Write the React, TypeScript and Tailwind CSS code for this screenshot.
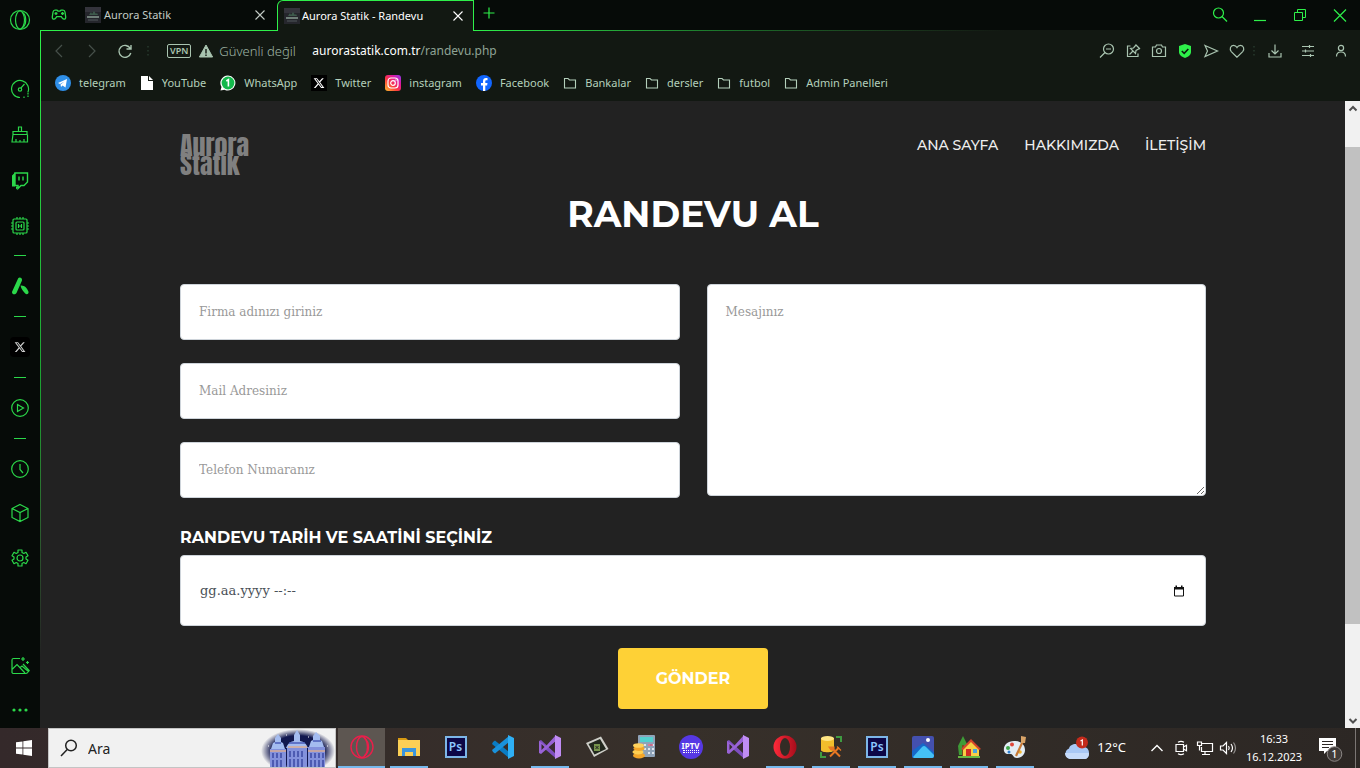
import type { ReactNode } from 'react';
import { FaXTwitter } from 'react-icons/fa6';

type IconProps = { className?: string; children: ReactNode; box?: string; width?: number };

function Line({ className = 'size-5', children, box = '0 0 20 20', width = 1.2 }: IconProps) {
  return (
    <svg className={className} viewBox={box} fill="none" stroke="currentColor" strokeWidth={width} aria-hidden="true">
      {children}
    </svg>
  );
}

function Favicon() {
  return (
    <svg className="size-4 shrink-0" viewBox="0 0 16 16" aria-hidden="true">
      <rect width="16" height="16" fill="#25262c" />
      <path d="M0 0h16v5H0z" fill="#34343c" />
      <path d="M2 9h12v2H2z" fill="#6f7e78" />
      <path d="M4 8l2-3 1 2 2-3 2 3 1-1 1 2z" fill="#3e5a4c" />
      <path d="M3 13h10" stroke="#50565a" />
    </svg>
  );
}

function CloseMark({ className }: { className: string }) {
  return (
    <Line className={className} box="0 0 12 12" width={1.1}>
      <path d="M1.5 1.5l9 9m0-9l-9 9" />
    </Line>
  );
}

function TabStrip() {
  return (
    <header className="flex h-[31px] shrink-0 bg-[#060b08] text-[11px]">
      <div className="flex w-[237px] shrink-0 items-center border-b border-[#2ef04a] pl-[11px]">
        <Line className="size-4 text-[#2bd84a]" box="0 0 16 16" width={1.3}>
          <path d="M4 3.200h2l1 .9h2l1-.9h2c1.200 0 1.800.8 2 2l.7 4.600c.2 1.500-.6 2.400-1.600 2.400-.9 0-1.400-.6-2-1.400l-.8-1.100H5.700l-.8 1.100c-.6.8-1.100 1.400-2 1.400-1 0-1.800-.9-1.600-2.400L2 5.200C2.200 4 2.800 3.200 4 3.200z" />
          <path d="M5 5v3M3.500 6.500h3M10 6.500h3M11.500 5v3" />
        </Line>
        <a href="#aurora" className="ml-[18px] flex flex-1 items-center gap-[3px] text-[#c3ccc5]">
          <Favicon />
          <span className="whitespace-nowrap">Aurora Statik</span>
        </a>
        <button aria-label="Sekmeyi kapat" className="mr-[11px]">
          <CloseMark className="size-3 text-[#c3ccc5]" />
        </button>
      </div>
      <div className="flex w-[197px] shrink-0 items-center rounded-tl-[6px] border-x border-t border-[#2ef04a] bg-[#121812] pr-[9px] pl-[6px] text-white">
        <a href="#randevu" className="flex flex-1 items-center gap-[2px]">
          <Favicon />
          <span className="whitespace-nowrap">Aurora Statik - Randevu</span>
        </a>
        <button aria-label="Sekmeyi kapat">
          <CloseMark className="size-3" />
        </button>
      </div>
      <div className="flex flex-1 flex-col">
        <div className="flex flex-1 items-center justify-between pr-3 pl-2 text-[#2ef04a]">
          <button aria-label="Yeni sekme" className="pb-1">
            <Line className="size-3.5" box="0 0 14 14"><path d="M7 1.500v11M1.500 7h11" /></Line>
          </button>
          <div className="flex items-center gap-6">
            <button aria-label="Ara">
              <Line className="size-4" box="0 0 16 16"><circle cx="6.500" cy="6" r="5" /><path d="M10 9.500l5 5" /></Line>
            </button>
            <button aria-label="Küçült">
              <Line className="size-4" box="0 0 16 16"><path d="M2 13.500h12" /></Line>
            </button>
            <button aria-label="Geri yükle">
              <Line className="size-4" box="0 0 16 16" width={1}><path d="M2.500 5.500h8v8h-8zM5.500 5.500v-3h8v8h-3" /></Line>
            </button>
            <button aria-label="Kapat">
              <Line className="size-4" box="0 0 16 16"><path d="M2 2.500l12 12m0-12l-12 12" /></Line>
            </button>
          </div>
        </div>
        <div className="h-px bg-linear-to-r from-[#2ef04a] via-[#1a6a28] via-30% to-[#121812] to-60%" />
      </div>
    </header>
  );
}

function AddressBar() {
  return (
    <div className="flex h-[39px] shrink-0 items-center pr-[11px] pl-[10px] text-[#a9c4b0]">
      <div className="flex items-center gap-[17px]">
        <button aria-label="Geri" className="text-[#46504a]">
          <Line className="size-4" box="0 0 16 16"><path d="M11 2L5 8l6 6" /></Line>
        </button>
        <button aria-label="İleri" className="text-[#46504a]">
          <Line className="size-4" box="0 0 16 16"><path d="M5 2l6 6-6 6" /></Line>
        </button>
        <button aria-label="Yenile">
          <Line className="size-4" box="0 0 16 16" width={1.4}><path d="M13.300 5.500A6 6 0 1 0 13.800 10M14 2v4h-4.500" /></Line>
        </button>
      </div>
      <Line className="mx-[10px] size-2.5 text-[#26382c]" box="0 0 10 10" width={1.6}><path d="M5 0v10" strokeDasharray="1.600 2.400" /></Line>
      <span className="ml-1 rounded-[2px] border border-[#a9c4b0] px-[2px] text-[9px] leading-3 font-semibold">VPN</span>
      <svg className="ml-2 size-3.5" viewBox="0 0 14 14" aria-hidden="true">
        <path d="M7 1l6.600 12H.4z" fill="#a9c4b0" stroke="#a9c4b0" strokeLinejoin="round" />
        <path d="M7 5v4.500M7 10.500v1.500" stroke="#121812" strokeWidth="1.400" />
      </svg>
      <span className="ml-[6px] w-[93px] pt-[2px] text-[13px] font-light whitespace-nowrap text-[#9fb5a5]">Güvenli değil</span>
      <div className="flex-1 text-[12px] text-[#8fa395]">
        <span className="text-white">aurorastatik.com.tr</span>/randevu.php
      </div>
      <div className="flex items-center gap-[10px]">
        <button aria-label="Uzaklaştır">
          <Line className="size-4" box="0 0 16 16"><circle cx="9.500" cy="6" r="5" /><path d="M6 9.500l-5 5M7 6h5" /></Line>
        </button>
        <button aria-label="Sabitle">
          <Line className="size-4" box="0 0 16 16"><path d="M5.500 3H2.500v10.500H13V10.500M10.500 1.500l4.500 4.500M11 2L8.500 5 5.500 5.500l5 5L11 7.500l3.500-2M8 8L4.500 11.500" /></Line>
        </button>
        <button aria-label="Anlık görüntü">
          <Line className="size-4" box="0 0 16 16"><path d="M1.500 4h3l1-2h5l1 2h3v9.500h-13z" /><circle cx="8" cy="8" r="2.500" /></Line>
        </button>
        <button aria-label="Engelleyici">
          <svg className="size-4" viewBox="0 0 16 16" aria-hidden="true">
            <path d="M8 1l6 2v6c0 3-3 5-6 6-3-1-6-3-6-6V3z" fill="#2ef04a" />
            <path d="M4.800 8l2.400 2.300L11.300 6" fill="none" stroke="#0c180e" strokeWidth="1.600" />
          </svg>
        </button>
        <button aria-label="Gönder">
          <Line className="size-4" box="0 0 16 16"><path d="M2 2.500L14.500 8 2 13.500 4.500 8z" /></Line>
        </button>
        <button aria-label="Favorilere ekle">
          <Line className="size-4" box="0 0 16 16"><path d="M8 14.200L2.300 8.600C.2 6.300 1.400 2.300 4.500 2.300 6.200 2.300 7.300 3.200 8 4.500c.7-1.300 1.800-2.200 3.500-2.200 3.100 0 4.300 4 2.200 6.300z" /></Line>
        </button>
      </div>
      <Line className="mx-1 size-2.5 text-[#26382c]" box="0 0 10 10" width={1.6}><path d="M5 0v10" strokeDasharray="1.600 2.400" /></Line>
      <div className="flex items-center gap-[17px] pl-1">
        <button aria-label="İndirilenler">
          <Line className="size-4" box="0 0 16 16"><path d="M8 1.500v9M4.500 7.500L8 11l3.500-3.500M2 10v4h12v-4" /></Line>
        </button>
        <button aria-label="Kolay kurulum">
          <Line className="size-4" box="0 0 16 16"><path d="M2 3.500h12M2 8h12M2 12.500h12M9.500 2v3M5.500 6.500v3M10.500 11v3" /></Line>
        </button>
        <button aria-label="Profil">
          <Line className="size-4" box="0 0 16 16"><circle cx="8" cy="5" r="2.600" /><path d="M3.500 13.500C3.500 10.500 5 9 8 9s4.500 1.500 4.500 4.500" /></Line>
        </button>
      </div>
    </div>
  );
}

function Folder() {
  return (
    <Line className="h-4 w-3.5" box="0 0 14 16" width={1.1}>
      <path d="M1.500 3.500h3.500l1.500 1.500h6v8h-11z" />
    </Line>
  );
}

const siteIcons: Record<string, ReactNode> = {
  telegram: (
    <svg className="size-4" viewBox="0 0 16 16" aria-hidden="true">
      <circle cx="8" cy="8" r="8" fill="#2f8fe8" />
      <path d="M3 8l9-4-1.500 8.500-3-2-1.500 1.500-.5-2.500L9.500 6.500 5 9z" fill="#fff" />
    </svg>
  ),
  YouTube: (
    <svg className="h-4 w-3.5" viewBox="0 0 14 16" aria-hidden="true">
      <path d="M1 1h7v5h5v9H1zM9 1l4 4H9z" fill="#fff" />
    </svg>
  ),
  WhatsApp: (
    <svg className="size-4" viewBox="0 0 16 16" aria-hidden="true">
      <path d="M8 .5a7.500 7.500 0 1 1-3.500 14.200L.5 15.500l1-3.600A7.500 7.500 0 0 1 8 .5z" fill="#fff" />
      <circle cx="8" cy="8" r="6.400" fill="#13b84b" />
      <path d="M6.300 6L8.400 4.700V11.500" fill="none" stroke="#fff" strokeWidth="1.600" />
    </svg>
  ),
  Twitter: (
    <span className="flex size-4 items-center justify-center bg-black text-white"><FaXTwitter className="size-3" /></span>
  ),
  instagram: (
    <svg className="size-4" viewBox="0 0 16 16" aria-hidden="true">
      <defs>
        <linearGradient id="ig" x1="0" y1="1" x2="1" y2="0">
          <stop offset="0" stopColor="#ffc12e" />
          <stop offset=".4" stopColor="#fb3a3c" />
          <stop offset=".7" stopColor="#e0179d" />
          <stop offset="1" stopColor="#8a3cf0" />
        </linearGradient>
      </defs>
      <rect width="16" height="16" rx="3" fill="url(#ig)" />
      <rect x="3" y="3" width="10" height="10" rx="3" fill="none" stroke="#fff" strokeWidth="1.200" />
      <circle cx="8" cy="8" r="2.300" fill="none" stroke="#fff" strokeWidth="1.200" />
      <circle cx="11" cy="5" r=".7" fill="#fff" />
    </svg>
  ),
  Facebook: (
    <svg className="size-4" viewBox="0 0 16 16" aria-hidden="true">
      <circle cx="8" cy="8" r="8" fill="#1166ff" />
      <path d="M7 16v-5.500H5V8h2V6.200C7 4 8.200 3 10 3h1.500v2.200h-1C9.600 5.200 9.300 5.600 9.300 6.400V8h2.200l-.4 2.500H9.300V16z" fill="#fff" />
    </svg>
  ),
};

const bookmarks = ['telegram', 'YouTube', 'WhatsApp', 'Twitter', 'instagram', 'Facebook', 'Bankalar', 'dersler', 'futbol', 'Admin Panelleri'];

function Bookmarks() {
  return (
    <nav aria-label="Yer imleri" className="flex h-[31px] shrink-0 items-start gap-3.5 pt-[5px] pl-[14px] text-[11px] text-[#b4d0bb]">
      {bookmarks.map((name) => (
        <a key={name} href="#bookmark" className="flex items-center gap-2 leading-4 whitespace-nowrap">
          {siteIcons[name] ?? <Folder />}
          {name}
        </a>
      ))}
    </nav>
  );
}

function Dash() {
  return <div className="h-px w-3 bg-[#2bd84a]" />;
}

function Sidebar() {
  return (
    <aside className="flex w-10 shrink-0 flex-col items-center bg-[#060b08] pt-[9px] text-[#2bd84a]">
      <button aria-label="Opera GX" className="mb-12">
        <Line className="size-[22px]" box="0 0 22 22"><circle cx="11" cy="11" r="9.500" /><ellipse cx="11" cy="11" rx="4.500" ry="9" /><path d="M13 3c5 3 5 13 0 16" /></Line>
      </button>
      <button aria-label="GX Control" className="mb-[26px]">
        <Line><path d="M10 18.500a8.500 8.500 0 1 1 7.800-5M10.800 9.200L14.500 5" /><circle cx="10" cy="10.500" r="1.700" /><path d="M18 14v4M14 17.500v1.500" strokeDasharray="1.500 1" /></Line>
      </button>
      <button aria-label="GX Cleaner" className="mb-[26px]">
        <Line><path d="M8.500 6V2h3v4M3 6.500h14v3H3zM3 9.500L2 17h15.500V9.500M6 17v-3M10 17v-2M14 17v-3" /></Line>
      </button>
      <button aria-label="Twitch" className="mb-[25px]">
        <Line width={1.4}>
          <path d="M5 2h12.500v9l-3.500 3.500h-3l-3 3v-3H5z" />
          <path d="M5 1.500L2 4.500v11h4v3l3-3H5z" fill="currentColor" stroke="none" />
          <path d="M9 5.500v4M13 5.500v4" />
        </Line>
      </button>
      <button aria-label="Mods" className="mb-[19px]">
        <Line><rect x="3" y="3" width="14" height="14" rx="1" /><rect x="6" y="6" width="8" height="8" rx="1" /><path d="M8.500 8v4M11.500 8v4M8.500 10h3M7 3V1M10 3V1M13 3V1M7 19v-2M10 19v-2M13 19v-2M3 7H1M3 10H1M3 13H1M19 7h-2M19 10h-2M19 13h-2" /></Line>
      </button>
      <Dash />
      <button aria-label="Aria" className="my-5">
        <svg className="size-5" viewBox="0 0 20 20" fill="currentColor" aria-hidden="true">
          <path d="M8.200 2.200c1.600-1.500 4.300 0 3.800 2.200L6.500 17c-1.200 2-4 1.800-4.500-.5 0-.8.200-1.200.5-1.700zM10.500 9.500c4-.5 6.500 2.500 8 6.200.5 2.200-1.700 3.300-3.300 1.800-2-2.500-4-4.500-4.700-8z" />
        </svg>
      </button>
      <Dash />
      <a href="#x" aria-label="X" className="my-5 flex size-5 items-center justify-center rounded-[4px] bg-black text-[#d0d0d0]">
        <FaXTwitter className="size-3" />
      </a>
      <Dash />
      <button aria-label="Player" className="my-5">
        <Line><circle cx="10" cy="10" r="8.300" /><path d="M7.500 6.500v7l6-3.500z" /></Line>
      </button>
      <Dash />
      <button aria-label="Geçmiş" className="mt-5 mb-6">
        <Line><circle cx="10" cy="10" r="8.300" /><path d="M10 5v5.500l3 3.500" /></Line>
      </button>
      <button aria-label="Eklentiler" className="mb-[25px]">
        <Line><path d="M10 1.500l8 4v9l-8 4-8-4v-9zM2 5.500l8 4 8-4M10 9.500v9" /></Line>
      </button>
      <button aria-label="Ayarlar">
        <Line><circle cx="10" cy="10" r="3" /><path d="M8 4.500V2h4v2.500l1.800 1 2.200-1.200 2 3.400L16 9v2l2 1.300-2 3.400-2.200-1.200-1.800 1V18H8v-2.500l-1.800-1L4 15.700l-2-3.400L4 11V9L2 7.700l2-3.400 2.200 1.200z" strokeLinejoin="round" /></Line>
      </button>
      <button aria-label="Duvar kâğıdı" className="mt-auto mb-[25px]">
        <Line><path d="M10 2.500H3.500A1.500 1.500 0 0 0 2 4v12.500A1.500 1.500 0 0 0 3.500 17.500H16c1.200 0 1.500-.5 1.500-1.500M2.500 13l4.500-4.500 8 8.500M9.500 12l2.500-2 7 6M13 8l6.500 7M13 1v4M11 3h4M17.500 5v3M16 6.500h3" /></Line>
      </button>
      <button aria-label="Daha fazla" className="mb-[9px]">
        <svg className="h-[18px] w-5" viewBox="0 0 20 18" fill="currentColor" aria-hidden="true">
          <circle cx="4" cy="9" r="1.600" /><circle cx="10" cy="9" r="1.600" /><circle cx="16" cy="9" r="1.600" />
        </svg>
      </button>
    </aside>
  );
}

const fieldClass =
  "w-full rounded-[4px] border border-[#ced4da] bg-white px-[18px] font-['Roboto_Slab','DejaVu_Serif',serif] text-[12px] text-[#495057] placeholder:text-[#999999]";

function Site() {
  return (
    <main className="min-w-0 flex-1 overflow-hidden bg-[#222222] px-8 font-['Montserrat','Inter',sans-serif]">
      <div className="mx-auto max-w-[1026px]">
        <div className="flex items-start justify-between pt-[35px]">
          <a
            href="#home"
            className="font-['Impact','Anton','Oswald',sans-serif] text-[26px] leading-[19px] text-[#808080]"
          >
            Aurora
            <br />
            Statik
          </a>
          <nav aria-label="Site" className="flex gap-[26px] text-[14px] leading-[18px] font-medium text-[#eeeeee]">
            <a href="#ana">ANA SAYFA</a>
            <a href="#hakkimizda">HAKKIMIZDA</a>
            <a href="#iletisim">İLETİŞİM</a>
          </nav>
        </div>
        <h1 className="mt-4 text-center text-[36px] leading-12 font-bold text-white">RANDEVU AL</h1>
        <form className="mt-[46px]">
          <div className="grid grid-cols-2 gap-[27px]">
            <div className="flex flex-col gap-[23px]">
              <input aria-label="Firma adı" placeholder="Firma adınızı giriniz" className={`h-14 ${fieldClass}`} />
              <input aria-label="Mail adresi" type="email" placeholder="Mail Adresiniz" className={`h-14 ${fieldClass}`} />
              <input aria-label="Telefon numarası" type="tel" placeholder="Telefon Numaranız" className={`h-14 ${fieldClass}`} />
            </div>
            <textarea aria-label="Mesaj" placeholder="Mesajınız" className={`block h-[212px] resize py-[18px] ${fieldClass}`} />
          </div>
          <label htmlFor="tarih" className="mt-7 block text-[16px] leading-6 font-bold text-white">
            RANDEVU TARİH VE SAATİNİ SEÇİNİZ
          </label>
          <div className="mt-[5px] flex items-center rounded-[4px] border border-[#ced4da] bg-white pr-5 pl-[19px]">
            <input
              id="tarih"
              defaultValue="gg.aa.yyyy --:--"
              className="h-[69px] flex-1 font-['Roboto_Slab','DejaVu_Serif',serif] text-[13px] text-[#495057] outline-none"
            />
            <button type="button" aria-label="Takvimi aç">
              <svg className="size-3" viewBox="0 0 12 12" aria-hidden="true">
                <path d="M1.500 2.500h9v8.500h-9z" fill="none" stroke="#111" />
                <path d="M1 2h10v2.500H1zM2.500.5h1.500V2H2.500zM8 .5h1.500V2H8z" fill="#111" />
              </svg>
            </button>
          </div>
          <button
            type="submit"
            className="mx-auto mt-[22px] block rounded-[4px] bg-[#fed136] px-[38px] py-[18px] text-[16px] leading-[25px] font-bold text-white"
          >
            GÖNDER
          </button>
        </form>
      </div>
    </main>
  );
}

function ScrollTrack() {
  return (
    <div className="flex w-[15px] shrink-0 flex-col items-center bg-[#f1f1f1] text-[#505050]">
      <Line className="h-[15px] w-3" box="0 0 12 15" width={2}><path d="M2.500 9.500L6 6l3.500 3.500" /></Line>
      <div className="mt-[31px] w-full flex-[477] bg-[#c1c1c1]" />
      <div className="flex-[89]" />
      <Line className="h-[15px] w-3" box="0 0 12 15" width={2}><path d="M2.500 6L6 9.500 9.500 6" /></Line>
    </div>
  );
}

function PhotoshopIcon() {
  return (
    <span className="flex size-[22px] items-center justify-center border-2 border-[#7cb6e8] bg-[#0c0747] text-[12px] font-semibold text-[#8cc8ff]">
      Ps
    </span>
  );
}

function VisualStudioIcon() {
  return (
    <svg className="size-6" viewBox="0 0 24 24" aria-hidden="true">
      <path d="M1 6l2-1 15 14-.5 4L1 9z" fill="#7e4fc0" />
      <path d="M1 6v12l2 1 15-13V0L8 11z" fill="#9963d6" />
      <path d="M3.500 9v6L6.500 12z" fill="#33292a" />
      <path d="M17 0l6 3v18l-6 3z" fill="#c08cf4" />
      <path d="M17 7v10l-6-5z" fill="#3a2a34" />
    </svg>
  );
}

type App = { name: string; open?: boolean; active?: boolean; icon: ReactNode };

const pinned: App[] = [
  {
    name: 'Opera GX', open: true, active: true,
    icon: <Line className="size-6 text-[#ea1f4b]" box="0 0 24 24" width={1.4}><circle cx="12" cy="12" r="11" /><ellipse cx="12" cy="12" rx="5.500" ry="10.500" /><path d="M14 3c6 4 6 14 0 18" /></Line>,
  },
  {
    name: 'Dosya Gezgini', open: true,
    icon: (
      <svg className="size-6" viewBox="0 0 24 24" aria-hidden="true">
        <path d="M1 3h8l2 2h-10z" fill="#d89a12" /><path d="M1 5h22v16H1z" fill="#fbcf55" />
        <path d="M5 13h14v8h-3v-4H8v4H5z" fill="#3a95dc" />
      </svg>
    ),
  },
  { name: 'Photoshop', icon: <PhotoshopIcon /> },
  {
    name: 'VS Code',
    icon: (
      <svg className="size-6" viewBox="0 0 24 24" aria-hidden="true">
        <path d="M2 7l2-1.500L18 17v6L1 9z" fill="#0a7cc4" />
        <path d="M2 17l2 1.500L18 7V1L1 15z" fill="#1a92dc" />
        <path d="M17 0l6 3v18l-6 3z" fill="#2fb0f5" />
      </svg>
    ),
  },
  { name: 'Visual Studio', open: true, icon: <VisualStudioIcon /> },
  {
    name: 'Emülatör',
    icon: (
      <svg className="size-6" viewBox="0 0 24 24" aria-hidden="true">
        <path d="M1 8l15-6.500L23.500 14 9 22z" fill="#cfcfc9" /><path d="M3.500 9l11.500-5L21 14 9.500 19.500z" fill="#22281e" />
        <path d="M9 9h6v7H9z" fill="#76944c" /><path d="M10.500 11l3 3m0-3l-3 3" stroke="#222" />
      </svg>
    ),
  },
  {
    name: 'Muhasebe',
    icon: (
      <svg className="size-6" viewBox="0 0 24 24" aria-hidden="true">
        <rect x="6" y="0" width="17" height="22" rx="1" fill="#8fa3b8" /><path d="M8 2h13v5H8z" fill="#53d0cf" />
        <path d="M12 10h2M16 10h2M20 10h2M12 14h2M16 14h2M20 14h2M16 18h2M20 18h2" stroke="#dfe6ee" strokeWidth="2" />
        <path d="M16 10h5" stroke="#d75a78" strokeWidth="1.500" />
        <ellipse cx="7" cy="20.500" rx="6" ry="3" fill="#f4a629" /><ellipse cx="6" cy="17" rx="5.500" ry="2.500" fill="#ffcf52" />
        <ellipse cx="7" cy="13.500" rx="5.500" ry="2.500" fill="#f4a629" /><ellipse cx="6.500" cy="10.500" rx="5.500" ry="2.300" fill="#ffd25c" />
      </svg>
    ),
  },
  {
    name: 'IPTV Smarters',
    icon: (
      <span className="flex size-6 flex-col items-center justify-center rounded-full bg-[#5638e4] text-[8px] leading-[8px] font-bold text-white">
        IPTV
        <span className="h-[3px] w-4 border-y border-dotted border-white" />
      </span>
    ),
  },
  { name: 'Visual Studio 2022', icon: <VisualStudioIcon /> },
  {
    name: 'Opera', open: true,
    icon: (
      <svg className="size-6" viewBox="0 0 24 24" aria-hidden="true">
        <defs>
          <linearGradient id="opera">
            <stop offset="0" stopColor="#ff2a3a" />
            <stop offset="1" stopColor="#a70d1b" />
          </linearGradient>
        </defs>
        <circle cx="12" cy="12" r="11.500" fill="url(#opera)" />
        <ellipse cx="12" cy="12" rx="5" ry="9" fill="#332c25" />
      </svg>
    ),
  },
];

const running: App[] = [
  {
    name: 'SQL Server', open: true,
    icon: (
      <svg className="size-6" viewBox="0 0 24 24" aria-hidden="true">
        <path d="M2 3v12c0 3 13 3 13 0V3z" fill="#f2bd2c" /><ellipse cx="8.500" cy="3.500" rx="6.500" ry="2.500" fill="#ffe584" />
        <path d="M17 2h5v5M2 17v5h5" fill="none" stroke="#3f9b41" strokeWidth="2" />
        <path d="M11 21.500l9-9M13 13.500l8 8" stroke="#e87722" strokeWidth="2" /><path d="M10 12h5v3h-3zM18 11.500l4 4" stroke="#e87722" fill="#e87722" strokeWidth="1.200" />
      </svg>
    ),
  },
  { name: 'Photoshop CC', open: true, icon: <PhotoshopIcon /> },
  {
    name: 'Fotoğraflar', open: true,
    icon: (
      <svg className="size-6" viewBox="0 0 24 24" aria-hidden="true">
        <rect x="1" y="1" width="22" height="22" rx="2" fill="#4450ae" /><path d="M1 16L12 8l11 9v4q0 2-2 2H3q-2 0-2-2z" fill="#1668c8" />
        <path d="M2 22l9-10q2-2 4 0l8 8q0 3-2 3H3z" fill="#45c1f5" /><circle cx="17" cy="5" r="2" fill="#fff" />
      </svg>
    ),
  },
  {
    name: 'Ev', open: true,
    icon: (
      <svg className="size-6" viewBox="0 0 24 24" aria-hidden="true">
        <path d="M6 1l5 10-2 9H2L1 11z" fill="#3e9b37" /><path d="M6 10v13" stroke="#7a4b1e" strokeWidth="2" />
        <path d="M6 13l8-7 8 7v9H6z" fill="#f8cf45" /><path d="M4 14L14 4l10 10-2 1-8-8-8 8z" fill="#d5432b" />
        <path d="M9 14h5v8H9z" fill="#d02c24" /><path d="M16 14h4v4h-4z" fill="#4aa3dc" /><path d="M1 21h22v2H1z" fill="#69b843" />
      </svg>
    ),
  },
  {
    name: 'Paint', open: true,
    icon: (
      <svg className="size-6" viewBox="0 0 24 24" aria-hidden="true">
        <path d="M11 6C4 6 0 11 1 16c1 4 5 3 7 3s2 4 6 4c5 0 8-4 8-8 0-6-5-9-11-9z" fill="#e3edf5" />
        <circle cx="5" cy="13" r="2" fill="#3da64a" /><circle cx="9" cy="9.500" r="2" fill="#e0483c" /><circle cx="6" cy="17" r="1.500" fill="#2d7fd0" />
        <circle cx="17" cy="17" r="1.800" fill="#f2b52c" />
        <path d="M20 6l-7 15" stroke="#c77a38" strokeWidth="2.200" /><path d="M18 1l5 1-1 6h-4z" fill="#d9a468" />
      </svg>
    ),
  },
];

function TaskButton({ app, className }: { app: App; className: string }) {
  return (
    <button aria-label={app.name} className={`flex shrink-0 flex-col items-center ${className} ${app.active ? 'bg-[#5d5651]' : ''}`}>
      <span className="flex flex-1 items-center">{app.icon}</span>
      <span className={`h-[2px] ${app.active ? 'w-full' : 'w-[38px]'} ${app.open ? 'bg-[#76b9ed]' : ''}`} />
    </button>
  );
}

function Castle() {
  return (
    <svg className="h-[38px] w-[74px]" viewBox="0 0 74 38" aria-hidden="true">
      <defs>
        <radialGradient id="night">
          <stop offset=".7" stopColor="#12184f" />
          <stop offset="1" stopColor="#f1f1f1" />
        </radialGradient>
      </defs>
      <ellipse cx="37" cy="22" rx="37" ry="22" fill="url(#night)" />
      <path d="M9 20h16v18H9zM26 18h20v20H26zM47 18h17v20H47z" fill="#8391dc" />
      <path d="M10 20l2-6 2-1V9l3-4 3 4v4l2 1 2 6zM25 19q2-6 8-7V6l3-5 3 5v6q6 1 8 7zM48 18l2-6 2-1V7l3-4 4 4v4l2 1 2 6z" fill="#a4bcf0" />
      <path d="M9 22h16M27 18h19M47 22h17" stroke="#d9ab92" strokeWidth="1.500" />
      <path d="M12 24v5M16 24v5M20 24v5M29 22v6M33 22v6M37 22v6M41 22v6M50 24v5M54 24v5M58 24v5M62 24v5M12 31v7M16 31v7M20 31v7M29 30v8M33 30v8M37 30v8M41 30v8M50 31v7M54 31v7M58 31v7M62 31v7" stroke="#3d4aa4" strokeWidth="1.500" />
      <path d="M14 14h6M28 14h16M52 12h8" stroke="#4a5cb8" strokeWidth="1.500" />
      <path d="M25 6h1M47 8h1M7 17h1M66 17h1" stroke="#fff" />
    </svg>
  );
}

function Taskbar() {
  return (
    <footer className="flex h-10 shrink-0 bg-linear-to-r from-[#34292a] via-[#37302a] to-[#2c2724] text-white">
      <button aria-label="Başlat" className="flex w-12 shrink-0 items-center justify-center">
        <svg className="size-4" viewBox="0 0 16 16" fill="#fff" aria-hidden="true">
          <path d="M0 2.300l6.500-.9v6.200H0zM7.300 1.300L16 0v7.600H7.300zM0 8.400h6.500v6.200L0 13.700zM7.300 8.400H16V16l-8.700-1.300z" />
        </svg>
      </button>
      <div className="flex w-[288px] shrink-0 items-center border border-[#c4c4c4] bg-[#f1f1f1] pl-[11px] text-[#222222]">
        <Line className="size-[18px]" box="0 0 18 18" width={1.5}><circle cx="11" cy="6.500" r="5.300" /><path d="M7.200 10.500L1 17" /></Line>
        <input aria-label="Ara" defaultValue="Ara" className="ml-[10px] w-0 flex-1 text-[14px] outline-none" />
        <Castle />
      </div>
      <div className="flex pl-[2px]">
        {pinned.map((app) => <TaskButton key={app.name} app={app} className="w-[47px]" />)}
        {running.map((app) => <TaskButton key={app.name} app={app} className="w-[46px]" />)}
      </div>
      <div className="ml-auto flex items-center pr-1">
        <button className="flex items-center gap-[7px] text-[13px]">
          <svg className="h-6 w-[26px]" viewBox="0 0 26 24" aria-hidden="true">
            <path d="M6 23a5.500 5.500 0 0 1-1-10.500C6 8 14 6 17 11c4-1 8 1 8 6 0 4-2 6-5 6z" fill="#a9c8f5" />
            <path d="M6 23a5.500 5.500 0 0 1-5-6h24c0 4-2 6-5 6z" fill="#c6dbfa" />
            <circle cx="18" cy="6.500" r="6" fill="#c42b1c" />
            <path d="M16.500 5L18.300 4V9.500" fill="none" stroke="#fff" strokeWidth="1.200" />
          </svg>
          12°C
        </button>
        <button aria-label="Gizli simgeler" className="ml-6">
          <Line className="size-3.5" box="0 0 14 14" width={1.4}><path d="M1.500 10L7 4.500l5.500 5.500" /></Line>
        </button>
        <button aria-label="Toplantı" className="ml-[9px]">
          <Line className="size-4" box="0 0 16 16"><path d="M3 4.500h7.500v7H3zM10.500 7l3-1.800v5.600l-3-1.800M5 2.200Q8 .5 11 2.200M5 13.800q3 1.700 6 0" /></Line>
        </button>
        <button aria-label="Ağ" className="ml-[7px]">
          <Line className="h-4 w-[18px]" box="0 0 18 16"><path d="M5 3.500h11.500v8H5.500V7M9 11.500v3M6 14.500h8M1.500 2h4v3.500h-4zM3.500 5.500v5" /></Line>
        </button>
        <button aria-label="Ses" className="ml-[5px]">
          <Line className="h-4 w-[18px]" box="0 0 18 16"><path d="M1.500 6h2.500L7.500 2.500v11L4 10H1.500zM9.500 6q1.500 2 0 4M12 4q3 4 0 8" /><path d="M14.500 2.500q4 5.500 0 11" opacity=".5" /></Line>
        </button>
        <div className="ml-[2px] flex w-[70px] flex-col items-center text-[11px] leading-[18px]">
          <span>16:33</span>
          <span>16.12.2023</span>
        </div>
        <button aria-label="Bildirimler" className="ml-2">
          <svg className="h-7 w-7" viewBox="0 0 28 28" aria-hidden="true">
            <path d="M2 4h17v13h-9l-3 3v-3H2z" fill="#fff" />
            <path d="M5 7.500h11M5 10.500h11M5 13.500h7" stroke="#2c2724" />
            <circle cx="17.500" cy="20" r="7.300" fill="#403b39" stroke="#8b8684" />
            <text x="17.500" y="24" textAnchor="middle" fontSize="11" fill="#fff">1</text>
          </svg>
        </button>
        <div className="ml-[10px] h-10 w-px bg-[#7b7674]" />
      </div>
    </footer>
  );
}

export default function App() {
  return (
    <div className="flex h-screen flex-col overflow-hidden bg-[#222222] font-['Segoe_UI','Noto_Sans',sans-serif]">
      <div className="flex min-h-0 flex-1">
        <Sidebar />
        <div className="flex min-w-0 flex-1 flex-col">
          <TabStrip />
          <div className="flex min-h-0 flex-1 bg-[#121812]">
            <div className="w-px shrink-0 bg-linear-to-b from-[#2ef04a] via-[#1b9a30] via-55% to-[#222222] to-90%" />
            <div className="flex min-w-0 flex-1 flex-col">
              <AddressBar />
              <Bookmarks />
              <div className="flex min-h-0 flex-1">
                <Site />
                <ScrollTrack />
              </div>
            </div>
          </div>
        </div>
      </div>
      <Taskbar />
    </div>
  );
}
